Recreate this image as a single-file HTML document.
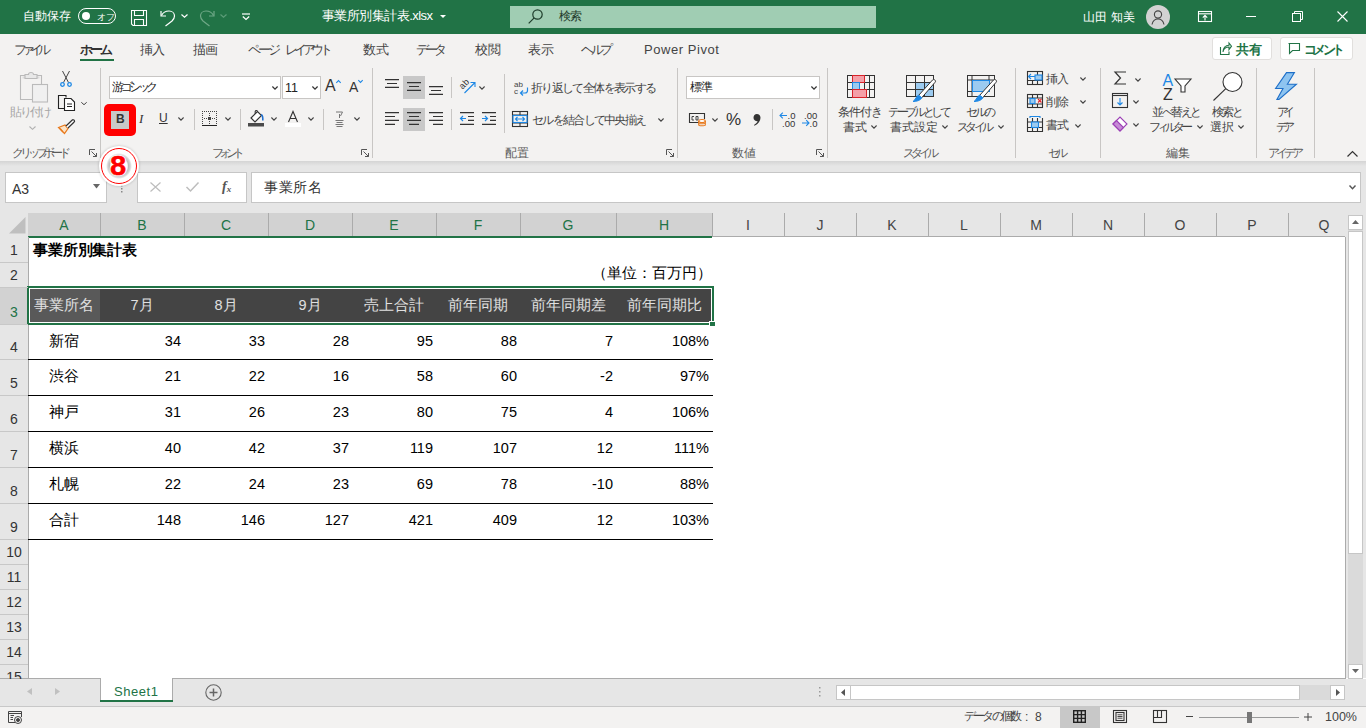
<!DOCTYPE html>
<html><head><meta charset="utf-8">
<style>
*{margin:0;padding:0;box-sizing:border-box}
html,body{width:1366px;height:728px;overflow:hidden;background:#fff;font-family:"Liberation Sans",sans-serif;position:relative}
.a{position:absolute}
.t{position:absolute;white-space:nowrap;line-height:1}
svg{position:absolute;overflow:visible}
#title{left:0;top:0;width:1366px;height:34px;background:#217346}
#tabs{left:0;top:34px;width:1366px;height:27px;background:#f3f2f1}
#ribbon{left:0;top:61px;width:1366px;height:100px;background:#f3f2f1}
#fbar{left:0;top:161px;width:1366px;height:52px;background:#e6e6e6}
.wt{color:#fff;font-size:12px}
.tab{font-size:13px;color:#444;top:43px}
.lbl{font-size:12px;color:#444}
.gl{font-size:12px;color:#5a5a5a;top:147px}
.sep{position:absolute;width:1px;background:#c8c6c4}
.chev{position:absolute}
</style></head><body>
<!-- TITLE BAR -->
<div id="title" class="a"></div>
<span class="t wt fit" style="left:23px;top:10px;width:48px;letter-spacing:0.0px">自動保存</span>
<div class="a" style="left:78px;top:8px;width:38px;height:16px;border:1px solid #fff;border-radius:8px"></div>
<div class="a" style="left:82px;top:12px;width:8px;height:8px;background:#fff;border-radius:50%"></div>
<span class="t" style="left:97px;top:13px;font-size:8.5px;color:#fff">オフ</span>
<svg style="left:131px;top:10px" width="16" height="16" viewBox="0 0 16 16" fill="none" stroke="#fff" stroke-width="1.1"><path d="M0.5 0.5H15.5V15.5H2L0.5 14Z"/><path d="M3.5 0.5V5.5H12.5V0.5"/><path d="M3.5 15.5V9.5H12.5V15.5"/></svg>
<svg style="left:160px;top:10px" width="16" height="16" viewBox="0 0 16 16" fill="none" stroke="#fff" stroke-width="1.2"><path d="M1 1V6H6"/><path d="M1.5 5.5C3 2.5 6 1 9 1C12.5 1 14.5 3.5 14.5 6C14.5 8 13.5 9.5 12 11L5.5 16"/></svg>
<svg style="left:181px;top:14px" width="7" height="4" viewBox="0 0 7 4" fill="none" stroke="#fff" stroke-width="1.2"><path d="M0.5 0.5L3.5 3.3L6.5 0.5"/></svg>
<svg style="left:199px;top:10px" width="16" height="16" viewBox="0 0 16 16" fill="none" stroke="#6fa887" stroke-width="1.2"><path d="M15 1V6H10"/><path d="M14.5 5.5C13 2.5 10 1 7 1C3.5 1 1.5 3.5 1.5 6C1.5 8 2.5 9.5 4 11L10.5 16"/></svg>
<svg style="left:220px;top:14px" width="7" height="4" viewBox="0 0 7 4" fill="none" stroke="#5c9c78" stroke-width="1.2"><path d="M0.5 0.5L3.5 3.3L6.5 0.5"/></svg>
<svg style="left:242px;top:13px" width="8" height="8" viewBox="0 0 8 8" fill="none" stroke="#fff" stroke-width="1.2"><path d="M0 1H8"/><path d="M0.8 3.5L4 6.5L7.2 3.5"/></svg>
<span class="t wt fit" style="left:322px;top:9px;width:111px;font-size:13px;letter-spacing:-0.55px">事業所別集計表.xlsx</span>
<svg style="left:440px;top:15px" width="6" height="3" viewBox="0 0 6 3"><path d="M0 0H6L3 3Z" fill="#fff"/></svg>
<div class="a" style="left:510px;top:6px;width:366px;height:22px;background:#a0cdb3"></div>
<svg style="left:528px;top:9px" width="15" height="15" viewBox="0 0 15 15" fill="none" stroke="#1e3d2b" stroke-width="1.2"><circle cx="9.5" cy="5.5" r="4.7"/><path d="M6.2 8.8L0.7 14.3"/></svg>
<span class="t fit" style="left:559px;top:10px;width:23px;font-size:12px;color:#1f3a2a;letter-spacing:-1.0px">検索</span>
<span class="t wt fit" style="left:1083px;top:11px;width:52px;font-size:12px;letter-spacing:0.16px">山田 知美</span>
<div class="a" style="left:1146px;top:5px;width:24px;height:24px;background:#d2d2d2;border-radius:50%"></div>
<svg style="left:1146px;top:5px" width="24" height="24" viewBox="0 0 24 24" fill="none" stroke="#444" stroke-width="1.1"><circle cx="12" cy="9.5" r="3.6"/><path d="M6 19.5C6.8 16 9 14 12 14C15 14 17.2 16 18 19.5"/></svg>
<svg style="left:1198px;top:11px" width="14" height="11" viewBox="0 0 14 11" fill="none" stroke="#fff" stroke-width="1.1"><rect x="0.5" y="0.5" width="13" height="10"/><path d="M0.5 2.8H13.5"/><path d="M7 9.5V4.5M4.8 6.6L7 4.4L9.2 6.6"/></svg>
<svg style="left:1246px;top:16px" width="10" height="1" viewBox="0 0 10 1"><path d="M0 0.5H10" stroke="#fff" stroke-width="1"/></svg>
<svg style="left:1292px;top:11px" width="11" height="11" viewBox="0 0 11 11" fill="none" stroke="#fff" stroke-width="1"><rect x="0.5" y="2.5" width="8" height="8"/><path d="M2.5 2.5V0.5H10.5V8.5H8.5"/></svg>
<svg style="left:1337px;top:11px" width="11" height="11" viewBox="0 0 11 11" fill="none" stroke="#fff" stroke-width="1.1"><path d="M0.5 0.5L10.5 10.5M10.5 0.5L0.5 10.5"/></svg>

<!-- TABS -->
<div id="tabs" class="a"></div>
<span class="t tab fit" style="left:14px;width:37px;letter-spacing:-5.0px">ファイル</span>
<span class="t tab fit" style="left:80px;width:33px;font-weight:bold;color:#333;letter-spacing:-3.0px">ホーム</span>
<div class="a" style="left:80px;top:59px;width:34px;height:3px;background:#217346"></div>
<span class="t tab fit" style="left:140px;width:25px;letter-spacing:-1.0px">挿入</span>
<span class="t tab fit" style="left:193px;width:25px;letter-spacing:-1.0px">描画</span>
<span class="t tab fit" style="left:248px;width:33px;letter-spacing:-3.0px">ページ</span><span class="t tab fit" style="left:285px;width:48px;letter-spacing:-4.25px">レイアウト</span>
<span class="t tab fit" style="left:363px;width:26px;letter-spacing:0.0px">数式</span>
<span class="t tab fit" style="left:416px;width:31px;letter-spacing:-4.0px">データ</span>
<span class="t tab fit" style="left:475px;width:26px;letter-spacing:0.0px">校閲</span>
<span class="t tab fit" style="left:528px;width:26px;letter-spacing:0.0px">表示</span>
<span class="t tab fit" style="left:581px;width:32px;letter-spacing:-3.5px">ヘルプ</span>
<span class="t tab fit" style="left:644px;width:75px;letter-spacing:0.56px">Power Pivot</span>
<div class="a" style="left:1212px;top:37px;width:60px;height:23px;background:#fff;border:1px solid #e1dfdd;border-radius:3px"></div>
<svg style="left:1220px;top:43px" width="12" height="12" viewBox="0 0 12 12" fill="none" stroke="#217346" stroke-width="1.1"><path d="M0.5 4V11.5H9V8.5"/><path d="M3 9C3.5 5.5 6 4 9 4V6.5L11.5 3.2L9 0V2.3C5.5 2.3 3 5 3 9Z"/></svg>
<span class="t fit" style="left:1236px;top:43px;width:26px;font-size:13px;font-weight:bold;color:#217346;letter-spacing:0.0px">共有</span>
<div class="a" style="left:1280px;top:37px;width:73px;height:23px;background:#fff;border:1px solid #e1dfdd;border-radius:3px"></div>
<svg style="left:1288px;top:43px" width="12" height="12" viewBox="0 0 12 12" fill="none" stroke="#217346" stroke-width="1.1"><path d="M0.5 0.5H11.5V7.5H4.5L1.5 10.5V0.5Z"/></svg>
<span class="t fit" style="left:1304px;top:43px;width:41px;font-size:13px;font-weight:bold;color:#217346;letter-spacing:-3.67px">コメント</span>
<!-- RIBBON -->
<div id="ribbon" class="a"></div>
<!-- separators -->
<div class="sep" style="left:100px;top:68px;height:90px"></div>
<div class="sep" style="left:372px;top:68px;height:90px"></div>
<div class="sep" style="left:677px;top:68px;height:90px"></div>
<div class="sep" style="left:827px;top:68px;height:90px"></div>
<div class="sep" style="left:1015px;top:68px;height:90px"></div>
<div class="sep" style="left:1100px;top:68px;height:90px"></div>
<div class="sep" style="left:1256px;top:68px;height:90px"></div>
<div class="sep" style="left:1314px;top:68px;height:90px"></div>
<!-- Clipboard -->
<svg style="left:19px;top:72px" width="30" height="31" viewBox="0 0 30 31" fill="none" stroke="#bababa" stroke-width="1.1"><path d="M13 27.5H1.5V3.5H22.5V12"/><path d="M3.5 5.5H20.5" stroke="#dcdcdc" stroke-width="2"/><path d="M6 2.5H9.5C9.5 1.2 10.5 0.5 12 0.5C13.5 0.5 14.5 1.2 14.5 2.5H18V6.5H6Z" fill="#e8e8e8"/><rect x="13.5" y="12.5" width="15" height="17.5" fill="#f0f0f0"/></svg>
<span class="t fit" style="left:10px;top:106px;width:42px;font-size:12px;color:#a6a6a6;letter-spacing:-2.0px">貼り付け</span>
<svg style="left:29px;top:126px" width="7" height="4" viewBox="0 0 7 4" fill="none" stroke="#b0b0b0" stroke-width="1.1"><path d="M0.5 0.5L3.5 3.3L6.5 0.5"/></svg>
<svg style="left:60px;top:71px" width="12" height="16" viewBox="0 0 12 16" fill="none" stroke="#444" stroke-width="1"><path d="M2.5 0L8.5 11.5M9.5 0L3.5 11.5"/><circle cx="2.5" cy="13.5" r="1.8" stroke="#1e88e5" stroke-width="1.3"/><circle cx="9.5" cy="13.5" r="1.8" stroke="#1e88e5" stroke-width="1.3"/></svg>
<svg style="left:58px;top:95px" width="17" height="16" viewBox="0 0 17 16" fill="none" stroke="#222" stroke-width="1.1"><path d="M8 2.5V0.5H0.5V13.5H6"/><path d="M6.5 3.5H13L16.5 7V15.5H6.5Z" fill="#fff"/><path d="M9 9H14M9 11.5H14"/></svg>
<svg style="left:81px;top:102px" width="6" height="3" viewBox="0 0 6 3" fill="none" stroke="#444" stroke-width="1"><path d="M0.3 0.3L3 2.7L5.7 0.3"/></svg>
<svg style="left:58px;top:119px" width="17" height="15" viewBox="0 0 17 15" fill="none" stroke-width="1.2"><path d="M0.5 8.5L7 6L10 9.5L6.5 14.5Z" fill="#fbe3c6" stroke="#e8791c"/><path d="M2 9.5L5 13" stroke="#e8791c"/><path d="M8 7L14 1.2C14.7 0.5 15.8 0.6 16.3 1.3C16.8 2 16.5 2.8 15.9 3.3L10 9" stroke="#333" fill="#fff"/></svg>
<span class="t gl fit" style="left:12px;width:59px;letter-spacing:-4.17px">クリップボード</span>
<svg style="left:89px;top:149px" width="8" height="8" viewBox="0 0 8 8" fill="none" stroke="#555" stroke-width="1"><path d="M0.5 6V0.5H6"/><path d="M2.5 2.5L7.5 7.5M7.5 4V7.5H4"/></svg>
<!-- Font -->
<div class="a" style="left:109px;top:76px;width:172px;height:23px;background:#fff;border:1px solid #c8c6c4"></div>
<span class="t fit" style="left:112px;top:81px;width:46px;font-size:12px;color:#222;letter-spacing:-3.5px">游ゴシック</span>
<svg style="left:272px;top:86px" width="6" height="4" viewBox="0 0 6 4" fill="none" stroke="#333" stroke-width="1.2"><path d="M0.4 0.5L3 3.2L5.6 0.5"/></svg>
<div class="a" style="left:282px;top:76px;width:39px;height:23px;background:#fff;border:1px solid #c8c6c4"></div>
<span class="t" style="left:285px;top:82px;font-size:12.5px;color:#222">11</span>
<svg style="left:312px;top:86px" width="6" height="4" viewBox="0 0 6 4" fill="none" stroke="#333" stroke-width="1.2"><path d="M0.4 0.5L3 3.2L5.6 0.5"/></svg>
<span class="t" style="left:325px;top:78px;font-size:16px;color:#333">A</span>
<svg style="left:336px;top:80px" width="5" height="3" viewBox="0 0 5 3" fill="none" stroke="#1e88e5" stroke-width="1.1"><path d="M0.3 2.8L2.5 0.5L4.7 2.8"/></svg>
<span class="t" style="left:349px;top:80px;font-size:14px;color:#333">A</span>
<svg style="left:358px;top:80px" width="5" height="3" viewBox="0 0 5 3" fill="none" stroke="#1e88e5" stroke-width="1.1"><path d="M0.3 0.2L2.5 2.5L4.7 0.2"/></svg>
<div class="a" style="left:104px;top:104px;width:32px;height:32px;background:#ff0000;border-radius:5px"></div>
<div class="a" style="left:111px;top:111px;width:18px;height:18px;background:#c8c8c8"></div>
<span class="t" style="left:116px;top:113px;font-size:12px;font-weight:bold;color:#333">B</span>
<span class="t" style="left:139px;top:112px;font-size:13px;font-style:italic;color:#333;font-family:'Liberation Serif',serif">I</span>
<span class="t" style="left:159px;top:112px;font-size:12px;color:#333;text-decoration:underline">U</span>
<svg style="left:178px;top:117px" width="6" height="4" viewBox="0 0 6 4" fill="none" stroke="#444" stroke-width="1.1"><path d="M0.4 0.5L3 3.2L5.6 0.5"/></svg>
<div class="sep" style="left:194px;top:109px;height:21px"></div>
<svg style="left:202px;top:111px" width="15" height="15" viewBox="0 0 15 15" shape-rendering="crispEdges"><g fill="#444"><path d="M0 0h1v1h-1zM2 0h1v1h-1zM4 0h1v1h-1zM6 0h1v1h-1zM8 0h1v1h-1zM10 0h1v1h-1zM12 0h1v1h-1zM14 0h1v1h-1z"/><path d="M0 2h1v1h-1zM0 4h1v1h-1zM0 6h1v1h-1zM0 8h1v1h-1zM0 10h1v1h-1zM0 12h1v1h-1z"/><path d="M14 2h1v1h-1zM14 4h1v1h-1zM14 6h1v1h-1zM14 8h1v1h-1zM14 10h1v1h-1zM14 12h1v1h-1z"/><path d="M7 2h1v1h-1zM7 4h1v1h-1zM7 8h1v1h-1zM7 10h1v1h-1zM7 12h1v1h-1z"/><path d="M2 7h1v1h-1zM4 7h1v1h-1zM10 7h1v1h-1zM12 7h1v1h-1zM6 6h3v3h-3z"/></g><rect x="0" y="13.5" width="15" height="1.5" fill="#222"/></svg>
<svg style="left:225px;top:117px" width="6" height="4" viewBox="0 0 6 4" fill="none" stroke="#444" stroke-width="1.1"><path d="M0.4 0.5L3 3.2L5.6 0.5"/></svg>
<div class="sep" style="left:240px;top:109px;height:21px"></div>
<svg style="left:248px;top:110px" width="17" height="17" viewBox="0 0 17 17" fill="none" stroke="#333" stroke-width="1.1"><path d="M3 8L9.5 1.5L13.5 5.5L7 12Z" fill="#fff"/><path d="M9.5 1.5C9 0.2 7.5 0.3 7.2 1.5V4" /><path d="M13.2 4.5C14.5 5.2 15 6.5 14.8 10.5" stroke="#1e6fd0" stroke-width="1.6"/><rect x="0" y="13" width="16" height="3.5" fill="#4a4a4a" stroke="none"/></svg>
<svg style="left:271px;top:117px" width="6" height="4" viewBox="0 0 6 4" fill="none" stroke="#444" stroke-width="1.1"><path d="M0.4 0.5L3 3.2L5.6 0.5"/></svg>
<svg style="left:288px;top:111px" width="10" height="11" viewBox="0 0 10 11" fill="none" stroke="#333" stroke-width="1.1"><path d="M0.5 11L5 0.5L9.5 11M2 7.5H8"/></svg>
<div class="a" style="left:285px;top:123px;width:16px;height:4px;background:#fff"></div>
<svg style="left:308px;top:117px" width="6" height="4" viewBox="0 0 6 4" fill="none" stroke="#444" stroke-width="1.1"><path d="M0.4 0.5L3 3.2L5.6 0.5"/></svg>
<div class="sep" style="left:323px;top:109px;height:21px"></div>
<svg style="left:335px;top:111px" width="9" height="16" viewBox="0 0 9 16" fill="none" stroke="#777" stroke-width="1"><path d="M1 1H7.5L5.5 5M4.5 3V7"/><path d="M0.5 9.5H8.5M1.5 11.5H7.5M0.5 13.5H8.5M1.5 15.5H7.5"/></svg>
<svg style="left:354px;top:117px" width="6" height="4" viewBox="0 0 6 4" fill="none" stroke="#444" stroke-width="1.1"><path d="M0.4 0.5L3 3.2L5.6 0.5"/></svg>
<span class="t gl fit" style="left:212px;width:33px;letter-spacing:-5.0px">フォント</span>
<svg style="left:361px;top:149px" width="8" height="8" viewBox="0 0 8 8" fill="none" stroke="#555" stroke-width="1"><path d="M0.5 6V0.5H6"/><path d="M2.5 2.5L7.5 7.5M7.5 4V7.5H4"/></svg>
<!-- Alignment -->
<svg style="left:385px;top:79px" width="15" height="9" viewBox="0 0 15 9" stroke="#333" stroke-width="1.2"><path d="M0 0.6H14M2 4.5H12M0 8.4H14"/></svg>
<div class="a" style="left:403px;top:76px;width:22px;height:23px;background:#c8c8c8"></div>
<svg style="left:407px;top:82px" width="14" height="9" viewBox="0 0 14 9" stroke="#333" stroke-width="1.2"><path d="M0 0.6H14M2 4.5H12M0 8.4H14"/></svg>
<svg style="left:429px;top:86px" width="14" height="9" viewBox="0 0 14 9" stroke="#333" stroke-width="1.2"><path d="M0 0.6H14M2 4.5H12M0 8.4H14"/></svg>
<div class="sep" style="left:451px;top:77px;height:21px"></div>
<svg style="left:459px;top:78px" width="17" height="16" viewBox="0 0 17 16" fill="none" stroke-width="1.1"><text x="0" y="9" font-size="9" fill="#333" stroke="none" transform="rotate(-45 5 6)" font-family="Liberation Sans">ab</text><path d="M5.5 15L16 4.5M11.5 4.5H16V9" stroke="#1e88e5"/></svg>
<svg style="left:479px;top:86px" width="6" height="4" viewBox="0 0 6 4" fill="none" stroke="#444" stroke-width="1.1"><path d="M0.4 0.5L3 3.2L5.6 0.5"/></svg>
<svg style="left:385px;top:112px" width="15" height="13" viewBox="0 0 15 13" stroke="#333" stroke-width="1.2"><path d="M0 0.6H14M0 4.5H10M0 8.4H14M0 12.3H10"/></svg>
<div class="a" style="left:403px;top:108px;width:22px;height:23px;background:#c8c8c8"></div>
<svg style="left:407px;top:112px" width="14" height="13" viewBox="0 0 14 13" stroke="#333" stroke-width="1.2"><path d="M0 0.6H14M2 4.5H12M0 8.4H14M2 12.3H12"/></svg>
<svg style="left:429px;top:112px" width="14" height="13" viewBox="0 0 14 13" stroke="#333" stroke-width="1.2"><path d="M0 0.6H14M4 4.5H14M0 8.4H14M4 12.3H14"/></svg>
<div class="sep" style="left:451px;top:109px;height:21px"></div>
<svg style="left:460px;top:112px" width="15" height="13" viewBox="0 0 15 13" fill="none" stroke="#333" stroke-width="1.2"><path d="M0 0.6H14M8 4.5H14M8 8.4H14M0 12.3H14"/><path d="M0.5 6.5H6M3 4L0.5 6.5L3 9" stroke="#1e88e5"/></svg>
<svg style="left:482px;top:112px" width="15" height="13" viewBox="0 0 15 13" fill="none" stroke="#333" stroke-width="1.2"><path d="M0 0.6H14M8 4.5H14M8 8.4H14M0 12.3H14"/><path d="M0 6.5H5.5M3 4L5.5 6.5L3 9" stroke="#1e88e5"/></svg>
<div class="sep" style="left:504px;top:74px;height:59px"></div>
<svg style="left:514px;top:80px" width="15" height="16" viewBox="0 0 15 16" fill="none"><text x="0" y="7" font-size="8" fill="#444" font-family="Liberation Sans">ab</text><text x="0" y="14" font-size="8" fill="#444" font-family="Liberation Sans">c</text><path d="M13.5 7.5V10.5C13.5 12 12.5 13 11 13H6.5M9 10.5L6.5 13L9 15.5" stroke="#1e88e5" stroke-width="1.2"/></svg>
<span class="t lbl fit" style="left:531px;top:82px;width:126px;letter-spacing:-1.64px">折り返して全体を表示する</span>
<svg style="left:512px;top:111px" width="16" height="16" viewBox="0 0 16 16" fill="none" stroke="#333" stroke-width="1.1"><rect x="0.5" y="0.5" width="15" height="15"/><path d="M0.5 4H15.5M0.5 12H15.5M8 0.5V4M8 12V15.5"/><rect x="1" y="4.5" width="14" height="7" stroke="#1e88e5"/><path d="M3.5 8H12.5M5.5 6L3.5 8L5.5 10M10.5 6L12.5 8L10.5 10" stroke="#1e88e5"/></svg>
<span class="t lbl fit" style="left:532px;top:114px;width:115px;letter-spacing:-1.7px">セルを結合して中央揃え</span>
<svg style="left:658px;top:118px" width="6" height="4" viewBox="0 0 6 4" fill="none" stroke="#444" stroke-width="1.1"><path d="M0.4 0.5L3 3.2L5.6 0.5"/></svg>
<span class="t gl fit" style="left:505px;width:24px;letter-spacing:0.0px">配置</span>
<svg style="left:666px;top:149px" width="8" height="8" viewBox="0 0 8 8" fill="none" stroke="#555" stroke-width="1"><path d="M0.5 6V0.5H6"/><path d="M2.5 2.5L7.5 7.5M7.5 4V7.5H4"/></svg>
<!-- Number -->
<div class="a" style="left:686px;top:76px;width:134px;height:23px;background:#fff;border:1px solid #c8c6c4"></div>
<span class="t fit" style="left:690px;top:81px;width:23px;font-size:12px;color:#222;letter-spacing:-1.0px">標準</span>
<svg style="left:811px;top:86px" width="6" height="4" viewBox="0 0 6 4" fill="none" stroke="#333" stroke-width="1.2"><path d="M0.4 0.5L3 3.2L5.6 0.5"/></svg>
<svg style="left:689px;top:113px" width="17" height="14" viewBox="0 0 17 14" fill="none" stroke="#333" stroke-width="1.1"><path d="M10 9.5H0.5V0.5H15.5V6"/><path d="M3 3.5H5M3 3.5V7H5M7 3.5H9V7H7Z" stroke-width="0.9"/><ellipse cx="13" cy="8" rx="3.3" ry="1.5" stroke="#e8791c" fill="#fff"/><path d="M9.7 8V12C9.7 13 16.3 13 16.3 12V8M9.7 10C9.7 11 16.3 11 16.3 10" stroke="#e8791c"/></svg>
<svg style="left:712px;top:118px" width="6" height="4" viewBox="0 0 6 4" fill="none" stroke="#444" stroke-width="1.1"><path d="M0.4 0.5L3 3.2L5.6 0.5"/></svg>
<span class="t" style="left:726px;top:111px;font-size:17px;color:#333">%</span>
<svg style="left:753px;top:114px" width="8" height="12" viewBox="0 0 8 12"><path d="M3.8 0C6 0 7.5 1.6 7.5 3.8C7.5 7 5.3 10 1.5 11.8L1 11C3 9.8 4.3 8.3 4.6 7.2C2.5 7.3 0.5 6 0.5 3.7C0.5 1.5 2 0 3.8 0Z" fill="#333"/></svg>
<div class="sep" style="left:772px;top:109px;height:21px"></div>
<svg style="left:779px;top:111px" width="16" height="16" viewBox="0 0 16 16" fill="none"><text x="8.5" y="7.5" font-size="9.5" fill="#333" font-family="Liberation Sans">.0</text><text x="3" y="15.5" font-size="9.5" fill="#333" font-family="Liberation Sans">.00</text><path d="M8 4.5H1M3.8 1.7L1 4.5L3.8 7.3" stroke="#1e88e5" stroke-width="1.1"/></svg>
<svg style="left:801px;top:111px" width="16" height="16" viewBox="0 0 16 16" fill="none"><text x="3" y="7.5" font-size="9.5" fill="#333" font-family="Liberation Sans">.00</text><text x="8.5" y="15.5" font-size="9.5" fill="#333" font-family="Liberation Sans">.0</text><path d="M1 12H8M5.2 9.2L8 12L5.2 14.8" stroke="#1e88e5" stroke-width="1.1"/></svg>
<span class="t gl fit" style="left:732px;width:24px;letter-spacing:0.0px">数値</span>
<svg style="left:816px;top:149px" width="8" height="8" viewBox="0 0 8 8" fill="none" stroke="#555" stroke-width="1"><path d="M0.5 6V0.5H6"/><path d="M2.5 2.5L7.5 7.5M7.5 4V7.5H4"/></svg>
<!-- Styles -->
<svg style="left:847px;top:75px" width="28" height="23" viewBox="0 0 28 23" fill="none" stroke="#333" stroke-width="1"><rect x="0.5" y="0.5" width="27" height="22"/><path d="M0.5 7.5H27.5M0.5 14.5H27.5M5.5 0.5V22.5M17.5 0.5V22.5M22.5 0.5V22.5"/><rect x="5.5" y="0.5" width="12" height="7" fill="#f4a0a8" stroke="#d8232a"/><rect x="5.5" y="7.5" width="7" height="7" fill="#9ccbf0" stroke="#1e88e5"/><rect x="5.5" y="14.5" width="14" height="8" fill="#f4a0a8" stroke="#d8232a"/></svg>
<span class="t lbl fit" style="left:838px;top:106px;width:45px;letter-spacing:-1.0px">条件付き</span>
<span class="t lbl fit" style="left:843px;top:121px;width:24px;letter-spacing:0.0px">書式</span>
<svg style="left:871px;top:125px" width="6" height="4" viewBox="0 0 6 4" fill="none" stroke="#444" stroke-width="1.1"><path d="M0.4 0.5L3 3.2L5.6 0.5"/></svg>
<svg style="left:906px;top:75px" width="31" height="27" viewBox="0 0 31 27" fill="none" stroke="#333" stroke-width="1"><rect x="9.5" y="7.5" width="18" height="14" fill="#9ccbf0" stroke="#1e88e5"/><rect x="0.5" y="0.5" width="27" height="21"/><path d="M0.5 7.5H27.5M0.5 14.5H27.5M9.5 0.5V21.5M18.5 0.5V21.5"/><path d="M12.5 20.5L26.5 5C27.5 4 29.5 4.8 29.5 6.2C29.5 6.8 29.2 7.2 28.8 7.6L15.5 23" fill="#fff"/><path d="M7 26.5C10.5 26.5 14.5 25.5 15.8 22.8L12.8 20.2C10 21 10 24.5 7 26.5Z" fill="#1e88e5" stroke="#1e88e5" stroke-linejoin="round"/></svg>
<span class="t lbl fit" style="left:888px;top:106px;width:64px;letter-spacing:-3.33px">テーブルとして</span>
<span class="t lbl fit" style="left:890px;top:121px;width:48px;letter-spacing:0.0px">書式設定</span>
<svg style="left:942px;top:125px" width="6" height="4" viewBox="0 0 6 4" fill="none" stroke="#444" stroke-width="1.1"><path d="M0.4 0.5L3 3.2L5.6 0.5"/></svg>
<svg style="left:967px;top:75px" width="31" height="27" viewBox="0 0 31 27" fill="none" stroke="#333" stroke-width="1"><rect x="0.5" y="0.5" width="27" height="21"/><path d="M0.5 5H27.5M0.5 16.5H5M5 0.5V21.5M22 0.5V5"/><rect x="5.5" y="5.5" width="17" height="11" fill="#9ccbf0" stroke="#1e88e5"/><path d="M12.5 20.5L26.5 5C27.5 4 29.5 4.8 29.5 6.2C29.5 6.8 29.2 7.2 28.8 7.6L15.5 23" fill="#fff"/><path d="M7 26.5C10.5 26.5 14.5 25.5 15.8 22.8L12.8 20.2C10 21 10 24.5 7 26.5Z" fill="#1e88e5" stroke="#1e88e5" stroke-linejoin="round"/></svg>
<span class="t lbl fit" style="left:966px;top:106px;width:30px;letter-spacing:-3.0px">セルの</span>
<span class="t lbl fit" style="left:957px;top:121px;width:37px;letter-spacing:-3.67px">スタイル</span>
<svg style="left:998px;top:125px" width="6" height="4" viewBox="0 0 6 4" fill="none" stroke="#444" stroke-width="1.1"><path d="M0.4 0.5L3 3.2L5.6 0.5"/></svg>
<span class="t gl fit" style="left:903px;width:36px;letter-spacing:-4.0px">スタイル</span>
<!-- Cells -->
<svg style="left:1027px;top:71px" width="16" height="14" viewBox="0 0 16 14" fill="none" stroke="#333" stroke-width="1.1"><rect x="0.5" y="0.5" width="15" height="13"/><path d="M0.5 9.5H15.5M5.5 9.5V13.5M10.5 0.5V13.5"/><rect x="8" y="4" width="7" height="5" fill="#9ccbf0" stroke="#1e88e5"/><path d="M1.5 5.5H8M4 3L1.5 5.5L4 8" stroke="#1e88e5"/></svg>
<span class="t lbl fit" style="left:1046px;top:73px;width:23px;letter-spacing:-1.0px">挿入</span>
<svg style="left:1080px;top:77px" width="6" height="4" viewBox="0 0 6 4" fill="none" stroke="#444" stroke-width="1.1"><path d="M0.4 0.5L3 3.2L5.6 0.5"/></svg>
<svg style="left:1027px;top:94px" width="16" height="14" viewBox="0 0 16 14" fill="none" stroke="#333" stroke-width="1.1"><rect x="0.5" y="0.5" width="15" height="13"/><path d="M0.5 4H15.5M0.5 10H15.5M5.5 0.5V4M5.5 10V13.5M10.5 0.5V4M10.5 10V13.5"/><rect x="3" y="4.5" width="5" height="5" fill="#9ccbf0" stroke="#1e88e5"/><path d="M11 5L14.5 8.5M14.5 5L11 8.5" stroke="#e8232a"/></svg>
<span class="t lbl fit" style="left:1046px;top:96px;width:23px;letter-spacing:-1.0px">削除</span>
<svg style="left:1080px;top:100px" width="6" height="4" viewBox="0 0 6 4" fill="none" stroke="#444" stroke-width="1.1"><path d="M0.4 0.5L3 3.2L5.6 0.5"/></svg>
<svg style="left:1027px;top:116px" width="16" height="16" viewBox="0 0 16 16" fill="none" stroke="#333" stroke-width="1.1"><path d="M0.5 2V15.5H15.5V2"/><path d="M0.5 6H15.5M0.5 11.5H15.5M5.5 2V15.5M10.5 2V15.5"/><rect x="4.5" y="6" width="7" height="5.5" fill="#9ccbf0" stroke="#1e88e5"/><path d="M3 0.5H13M3 0V2M13 0V2" stroke="#1e88e5"/></svg>
<span class="t lbl fit" style="left:1046px;top:119px;width:23px;letter-spacing:-1.0px">書式</span>
<svg style="left:1075px;top:124px" width="6" height="4" viewBox="0 0 6 4" fill="none" stroke="#444" stroke-width="1.1"><path d="M0.4 0.5L3 3.2L5.6 0.5"/></svg>
<span class="t gl fit" style="left:1048px;width:20px;letter-spacing:-4.0px">セル</span>
<!-- Editing -->
<svg style="left:1114px;top:71px" width="12" height="14" viewBox="0 0 12 14" fill="none" stroke="#333" stroke-width="1.2"><path d="M12 1H1L6.5 7L1 13H12"/></svg>
<svg style="left:1135px;top:78px" width="6" height="4" viewBox="0 0 6 4" fill="none" stroke="#444" stroke-width="1.1"><path d="M0.4 0.5L3 3.2L5.6 0.5"/></svg>
<svg style="left:1112px;top:93px" width="16" height="15" viewBox="0 0 16 15" fill="none" stroke="#333" stroke-width="1.1"><rect x="0.5" y="0.5" width="15" height="14"/><path d="M0.5 2.5H15.5"/><path d="M8 5V12M5.5 9.5L8 12L10.5 9.5" stroke="#1e88e5"/></svg>
<svg style="left:1133px;top:100px" width="6" height="4" viewBox="0 0 6 4" fill="none" stroke="#444" stroke-width="1.1"><path d="M0.4 0.5L3 3.2L5.6 0.5"/></svg>
<svg style="left:1112px;top:116px" width="16" height="16" viewBox="0 0 16 16" fill="none" stroke="#9b3fb5" stroke-width="1.1"><path d="M1 8L8 1L15 8L8 15Z" fill="#fff"/><path d="M1 8L4.5 4.5L11.5 11.5L8 15Z" fill="#c68bd6"/></svg>
<svg style="left:1133px;top:123px" width="6" height="4" viewBox="0 0 6 4" fill="none" stroke="#444" stroke-width="1.1"><path d="M0.4 0.5L3 3.2L5.6 0.5"/></svg>
<svg style="left:1163px;top:73px" width="29" height="27" viewBox="0 0 29 27" fill="none"><text x="-0.5" y="13" font-size="16" fill="#1e88e5" font-family="Liberation Sans">A</text><text x="0" y="26.5" font-size="16" fill="#333" font-family="Liberation Sans">Z</text><path d="M12 6H28L22 13V19H18V13Z" stroke="#333" stroke-width="1.1" fill="#fff"/></svg>
<span class="t lbl fit" style="left:1152px;top:106px;width:50px;letter-spacing:-2.5px">並べ替えと</span>
<span class="t lbl fit" style="left:1149px;top:121px;width:44px;letter-spacing:-4.0px">フィルター</span>
<svg style="left:1197px;top:125px" width="6" height="4" viewBox="0 0 6 4" fill="none" stroke="#444" stroke-width="1.1"><path d="M0.4 0.5L3 3.2L5.6 0.5"/></svg>
<svg style="left:1213px;top:72px" width="30" height="29" viewBox="0 0 30 29" fill="none" stroke="#333" stroke-width="1.1"><circle cx="19.5" cy="10" r="9.5" fill="#fff"/><path d="M12.8 16.7L0.5 28.5"/></svg>
<span class="t lbl fit" style="left:1212px;top:106px;width:32px;letter-spacing:-2.0px">検索と</span>
<span class="t lbl fit" style="left:1210px;top:121px;width:24px;letter-spacing:0.0px">選択</span>
<svg style="left:1238px;top:125px" width="6" height="4" viewBox="0 0 6 4" fill="none" stroke="#444" stroke-width="1.1"><path d="M0.4 0.5L3 3.2L5.6 0.5"/></svg>
<span class="t gl fit" style="left:1166px;width:24px;letter-spacing:0.0px">編集</span>
<!-- Ideas -->
<svg style="left:1275px;top:72px" width="22" height="28" viewBox="0 0 22 28" fill="none"><path d="M11.5 0.6H19.4L12.4 12.2H21.4L4 27.4H1.9L8 16.5H0.6Z" fill="#8ec4f0" stroke="#1e6fc8" stroke-width="1.1" stroke-linejoin="miter"/></svg>
<span class="t lbl fit" style="left:1277px;top:106px;width:18px;letter-spacing:-6.0px">アイ</span>
<span class="t lbl fit" style="left:1276px;top:121px;width:19px;letter-spacing:-5.0px">デア</span>
<span class="t gl fit" style="left:1268px;width:36px;letter-spacing:-4.0px">アイデア</span>
<svg style="left:1347px;top:151px" width="11" height="6" viewBox="0 0 11 6" fill="none" stroke="#333" stroke-width="1.2"><path d="M0.5 5.5L5.5 0.5L10.5 5.5"/></svg>
<!-- ribbon shadow -->
<div class="a" style="left:0;top:161px;width:1366px;height:5px;background:linear-gradient(#d2d2d2,#e6e6e6)"></div>
<!-- FORMULA BAR -->
<div id="fbar" class="a"></div>
<div class="a" style="left:0;top:161px;width:1366px;height:5px;background:linear-gradient(#d4d4d4,#e6e6e6)"></div>
<div class="a" style="left:5px;top:172px;width:102px;height:31px;background:#fff;border:1px solid #c6c6c6"></div>
<span class="t" style="left:12px;top:182px;font-size:14px;color:#333">A3</span>
<svg style="left:93px;top:184px" width="7" height="5" viewBox="0 0 7 5"><path d="M0 0H7L3.5 4.5Z" fill="#666"/></svg>
<svg style="left:121px;top:185px" width="2" height="8" viewBox="0 0 2 8" fill="#888"><rect x="0" y="0" width="1.5" height="1.5"/><rect x="0" y="3" width="1.5" height="1.5"/><rect x="0" y="6" width="1.5" height="1.5"/></svg>
<div class="a" style="left:137px;top:172px;width:110px;height:31px;background:#fff;border:1px solid #c6c6c6"></div>
<svg style="left:150px;top:182px" width="11" height="10" viewBox="0 0 11 10" fill="none" stroke="#bdbdbd" stroke-width="1.2"><path d="M0.5 0.5L10.5 9.5M10.5 0.5L0.5 9.5"/></svg>
<svg style="left:186px;top:182px" width="13" height="10" viewBox="0 0 13 10" fill="none" stroke="#bdbdbd" stroke-width="1.5"><path d="M0.5 5L4.5 9L12.5 0.5"/></svg>
<span class="t" style="left:222px;top:180px;font-size:14px;color:#555;font-style:italic;font-weight:bold;font-family:'Liberation Serif',serif">f<span style="font-size:9px;position:relative;top:1px">x</span></span>
<div class="a" style="left:251px;top:172px;width:1110px;height:31px;background:#fff;border:1px solid #c6c6c6"></div>
<span class="t fit" style="left:264px;top:180px;width:58px;font-size:14px;color:#333;letter-spacing:0.67px">事業所名</span>
<svg style="left:1349px;top:185px" width="7" height="5" viewBox="0 0 7 5" fill="none" stroke="#555" stroke-width="1.4"><path d="M0.5 0.5L3.5 3.8L6.5 0.5"/></svg>

<!-- COLUMN HEADERS -->
<div class="a" style="left:0;top:213px;width:1346px;height:24px;background:#e6e6e6"></div>
<div class="a" style="left:28px;top:213px;width:684px;height:24px;background:#d2d2d2"></div>
<svg style="left:9px;top:217px" width="17" height="17" viewBox="0 0 17 17"><path d="M16.5 0V16.5H0Z" fill="#bfbfbf"/></svg>
<div id="cols"></div>
<div class="a" style="left:28px;top:236px;width:684px;height:2px;background:#217346"></div>
<div class="a" style="left:712px;top:236px;width:633px;height:1px;background:#ababab"></div>

<!-- ROW HEADERS -->
<div class="a" style="left:0;top:237px;width:28px;height:441px;background:#e6e6e6"></div>
<div class="a" style="left:0;top:287px;width:28px;height:37px;background:#d2d2d2"></div>
<div class="a" style="left:28px;top:237px;width:1px;height:441px;background:#ababab"></div>
<div id="rows"></div>

<!-- SHEET -->
<div class="a" style="left:29px;top:238px;width:1316px;height:440px;background:#fff"></div>
<div class="a" style="left:1345px;top:237px;width:1px;height:442px;background:#ababab"></div>
<div class="a" style="left:0;top:678px;width:1346px;height:1px;background:#ababab"></div>
<span class="t fit" style="left:33px;top:243px;width:104px;font-size:14.5px;font-weight:bold;color:#000;letter-spacing:-0.17px">事業所別集計表</span>
<span class="t" style="left:592px;top:266px;font-size:14.67px;color:#000">（単位：百万円）</span>
<!-- header row -->
<div class="a" style="left:27px;top:286px;width:687px;height:39px;border:2px solid #217346"></div>
<div class="a" style="left:29px;top:288px;width:683px;height:35px;border:1px solid #fff"></div>
<div class="a" style="left:30px;top:289px;width:681px;height:33px;background:#444444"></div>
<div class="a" style="left:30px;top:289px;width:70px;height:33px;background:#595959"></div>
<div class="a" style="left:709px;top:321px;width:6px;height:5px;background:#217346;border:1px solid #fff;border-right:none;border-bottom:none"></div>
<!-- COL LABELS -->
<div class="t" style="left:28px;top:218px;width:72px;text-align:center;font-size:14px;color:#217346">A</div>
<div class="t" style="left:100px;top:218px;width:84px;text-align:center;font-size:14px;color:#217346">B</div>
<div class="a" style="left:100px;top:213px;width:1px;height:23px;background:#ababab"></div>
<div class="t" style="left:184px;top:218px;width:84px;text-align:center;font-size:14px;color:#217346">C</div>
<div class="a" style="left:184px;top:213px;width:1px;height:23px;background:#ababab"></div>
<div class="t" style="left:268px;top:218px;width:84px;text-align:center;font-size:14px;color:#217346">D</div>
<div class="a" style="left:268px;top:213px;width:1px;height:23px;background:#ababab"></div>
<div class="t" style="left:352px;top:218px;width:84px;text-align:center;font-size:14px;color:#217346">E</div>
<div class="a" style="left:352px;top:213px;width:1px;height:23px;background:#ababab"></div>
<div class="t" style="left:436px;top:218px;width:84px;text-align:center;font-size:14px;color:#217346">F</div>
<div class="a" style="left:436px;top:213px;width:1px;height:23px;background:#ababab"></div>
<div class="t" style="left:520px;top:218px;width:96px;text-align:center;font-size:14px;color:#217346">G</div>
<div class="a" style="left:520px;top:213px;width:1px;height:23px;background:#ababab"></div>
<div class="t" style="left:616px;top:218px;width:96px;text-align:center;font-size:14px;color:#217346">H</div>
<div class="a" style="left:616px;top:213px;width:1px;height:23px;background:#ababab"></div>
<div class="t" style="left:712px;top:218px;width:72px;text-align:center;font-size:14px;color:#444">I</div>
<div class="a" style="left:712px;top:213px;width:1px;height:23px;background:#ababab"></div>
<div class="t" style="left:784px;top:218px;width:72px;text-align:center;font-size:14px;color:#444">J</div>
<div class="a" style="left:784px;top:213px;width:1px;height:23px;background:#ababab"></div>
<div class="t" style="left:856px;top:218px;width:72px;text-align:center;font-size:14px;color:#444">K</div>
<div class="a" style="left:856px;top:213px;width:1px;height:23px;background:#ababab"></div>
<div class="t" style="left:928px;top:218px;width:72px;text-align:center;font-size:14px;color:#444">L</div>
<div class="a" style="left:928px;top:213px;width:1px;height:23px;background:#ababab"></div>
<div class="t" style="left:1000px;top:218px;width:72px;text-align:center;font-size:14px;color:#444">M</div>
<div class="a" style="left:1000px;top:213px;width:1px;height:23px;background:#ababab"></div>
<div class="t" style="left:1072px;top:218px;width:72px;text-align:center;font-size:14px;color:#444">N</div>
<div class="a" style="left:1072px;top:213px;width:1px;height:23px;background:#ababab"></div>
<div class="t" style="left:1144px;top:218px;width:72px;text-align:center;font-size:14px;color:#444">O</div>
<div class="a" style="left:1144px;top:213px;width:1px;height:23px;background:#ababab"></div>
<div class="t" style="left:1216px;top:218px;width:72px;text-align:center;font-size:14px;color:#444">P</div>
<div class="a" style="left:1216px;top:213px;width:1px;height:23px;background:#ababab"></div>
<div class="t" style="left:1288px;top:218px;width:72px;text-align:center;font-size:14px;color:#444">Q</div>
<div class="a" style="left:1288px;top:213px;width:1px;height:23px;background:#ababab"></div>
<div class="a" style="left:1288px;top:213px;width:1px;height:23px;background:#ababab"></div>
<!-- ROW LABELS -->
<div class="t" style="left:0;top:243px;width:28px;text-align:center;font-size:14px;color:#333">1</div>
<div class="a" style="left:0;top:262px;width:28px;height:1px;background:#c8c8c8"></div>
<div class="t" style="left:0;top:268px;width:28px;text-align:center;font-size:14px;color:#333">2</div>
<div class="a" style="left:0;top:287px;width:28px;height:1px;background:#c8c8c8"></div>
<div class="t" style="left:0;top:305px;width:28px;text-align:center;font-size:14px;color:#217346">3</div>
<div class="a" style="left:0;top:324px;width:28px;height:1px;background:#c8c8c8"></div>
<div class="t" style="left:0;top:340px;width:28px;text-align:center;font-size:14px;color:#333">4</div>
<div class="a" style="left:0;top:359px;width:28px;height:1px;background:#c8c8c8"></div>
<div class="t" style="left:0;top:376px;width:28px;text-align:center;font-size:14px;color:#333">5</div>
<div class="a" style="left:0;top:395px;width:28px;height:1px;background:#c8c8c8"></div>
<div class="t" style="left:0;top:412px;width:28px;text-align:center;font-size:14px;color:#333">6</div>
<div class="a" style="left:0;top:431px;width:28px;height:1px;background:#c8c8c8"></div>
<div class="t" style="left:0;top:448px;width:28px;text-align:center;font-size:14px;color:#333">7</div>
<div class="a" style="left:0;top:467px;width:28px;height:1px;background:#c8c8c8"></div>
<div class="t" style="left:0;top:484px;width:28px;text-align:center;font-size:14px;color:#333">8</div>
<div class="a" style="left:0;top:503px;width:28px;height:1px;background:#c8c8c8"></div>
<div class="t" style="left:0;top:520px;width:28px;text-align:center;font-size:14px;color:#333">9</div>
<div class="a" style="left:0;top:539px;width:28px;height:1px;background:#c8c8c8"></div>
<div class="t" style="left:0;top:545px;width:28px;text-align:center;font-size:14px;color:#333">10</div>
<div class="a" style="left:0;top:564px;width:28px;height:1px;background:#c8c8c8"></div>
<div class="t" style="left:0;top:570px;width:28px;text-align:center;font-size:14px;color:#333">11</div>
<div class="a" style="left:0;top:589px;width:28px;height:1px;background:#c8c8c8"></div>
<div class="t" style="left:0;top:595px;width:28px;text-align:center;font-size:14px;color:#333">12</div>
<div class="a" style="left:0;top:614px;width:28px;height:1px;background:#c8c8c8"></div>
<div class="t" style="left:0;top:620px;width:28px;text-align:center;font-size:14px;color:#333">13</div>
<div class="a" style="left:0;top:639px;width:28px;height:1px;background:#c8c8c8"></div>
<div class="t" style="left:0;top:645px;width:28px;text-align:center;font-size:14px;color:#333">14</div>
<div class="a" style="left:0;top:664px;width:28px;height:1px;background:#c8c8c8"></div>
<div class="t" style="left:0;top:670px;width:28px;text-align:center;font-size:14px;color:#333">15</div>
<!-- CELLS -->
<div class="t" style="left:28px;top:298px;width:72px;text-align:center;font-size:14.5px;color:#e0e0e0">事業所名</div>
<div class="t" style="left:100px;top:298px;width:84px;text-align:center;font-size:14.5px;color:#e0e0e0">7月</div>
<div class="t" style="left:184px;top:298px;width:84px;text-align:center;font-size:14.5px;color:#e0e0e0">8月</div>
<div class="t" style="left:268px;top:298px;width:84px;text-align:center;font-size:14.5px;color:#e0e0e0">9月</div>
<div class="t" style="left:352px;top:298px;width:84px;text-align:center;font-size:14.5px;color:#e0e0e0">売上合計</div>
<div class="t" style="left:436px;top:298px;width:84px;text-align:center;font-size:14.5px;color:#e0e0e0">前年同期</div>
<div class="t" style="left:520px;top:298px;width:96px;text-align:center;font-size:14.5px;color:#e0e0e0">前年同期差</div>
<div class="t" style="left:616px;top:298px;width:96px;text-align:center;font-size:14.5px;color:#e0e0e0">前年同期比</div>
<div class="t" style="left:28px;top:334px;width:72px;text-align:center;font-size:14.5px;color:#000">新宿</div>
<div class="t" style="left:100px;top:334px;width:81px;text-align:right;font-size:14.5px;color:#000">34</div>
<div class="t" style="left:184px;top:334px;width:81px;text-align:right;font-size:14.5px;color:#000">33</div>
<div class="t" style="left:268px;top:334px;width:81px;text-align:right;font-size:14.5px;color:#000">28</div>
<div class="t" style="left:352px;top:334px;width:81px;text-align:right;font-size:14.5px;color:#000">95</div>
<div class="t" style="left:436px;top:334px;width:81px;text-align:right;font-size:14.5px;color:#000">88</div>
<div class="t" style="left:520px;top:334px;width:93px;text-align:right;font-size:14.5px;color:#000">7</div>
<div class="t" style="left:616px;top:334px;width:93px;text-align:right;font-size:14.5px;color:#000">108%</div>
<div class="a" style="left:28px;top:359px;width:685px;height:1px;background:#000"></div>
<div class="t" style="left:28px;top:369px;width:72px;text-align:center;font-size:14.5px;color:#000">渋谷</div>
<div class="t" style="left:100px;top:369px;width:81px;text-align:right;font-size:14.5px;color:#000">21</div>
<div class="t" style="left:184px;top:369px;width:81px;text-align:right;font-size:14.5px;color:#000">22</div>
<div class="t" style="left:268px;top:369px;width:81px;text-align:right;font-size:14.5px;color:#000">16</div>
<div class="t" style="left:352px;top:369px;width:81px;text-align:right;font-size:14.5px;color:#000">58</div>
<div class="t" style="left:436px;top:369px;width:81px;text-align:right;font-size:14.5px;color:#000">60</div>
<div class="t" style="left:520px;top:369px;width:93px;text-align:right;font-size:14.5px;color:#000">-2</div>
<div class="t" style="left:616px;top:369px;width:93px;text-align:right;font-size:14.5px;color:#000">97%</div>
<div class="a" style="left:28px;top:395px;width:685px;height:1px;background:#000"></div>
<div class="t" style="left:28px;top:405px;width:72px;text-align:center;font-size:14.5px;color:#000">神戸</div>
<div class="t" style="left:100px;top:405px;width:81px;text-align:right;font-size:14.5px;color:#000">31</div>
<div class="t" style="left:184px;top:405px;width:81px;text-align:right;font-size:14.5px;color:#000">26</div>
<div class="t" style="left:268px;top:405px;width:81px;text-align:right;font-size:14.5px;color:#000">23</div>
<div class="t" style="left:352px;top:405px;width:81px;text-align:right;font-size:14.5px;color:#000">80</div>
<div class="t" style="left:436px;top:405px;width:81px;text-align:right;font-size:14.5px;color:#000">75</div>
<div class="t" style="left:520px;top:405px;width:93px;text-align:right;font-size:14.5px;color:#000">4</div>
<div class="t" style="left:616px;top:405px;width:93px;text-align:right;font-size:14.5px;color:#000">106%</div>
<div class="a" style="left:28px;top:431px;width:685px;height:1px;background:#000"></div>
<div class="t" style="left:28px;top:441px;width:72px;text-align:center;font-size:14.5px;color:#000">横浜</div>
<div class="t" style="left:100px;top:441px;width:81px;text-align:right;font-size:14.5px;color:#000">40</div>
<div class="t" style="left:184px;top:441px;width:81px;text-align:right;font-size:14.5px;color:#000">42</div>
<div class="t" style="left:268px;top:441px;width:81px;text-align:right;font-size:14.5px;color:#000">37</div>
<div class="t" style="left:352px;top:441px;width:81px;text-align:right;font-size:14.5px;color:#000">119</div>
<div class="t" style="left:436px;top:441px;width:81px;text-align:right;font-size:14.5px;color:#000">107</div>
<div class="t" style="left:520px;top:441px;width:93px;text-align:right;font-size:14.5px;color:#000">12</div>
<div class="t" style="left:616px;top:441px;width:93px;text-align:right;font-size:14.5px;color:#000">111%</div>
<div class="a" style="left:28px;top:467px;width:685px;height:1px;background:#000"></div>
<div class="t" style="left:28px;top:477px;width:72px;text-align:center;font-size:14.5px;color:#000">札幌</div>
<div class="t" style="left:100px;top:477px;width:81px;text-align:right;font-size:14.5px;color:#000">22</div>
<div class="t" style="left:184px;top:477px;width:81px;text-align:right;font-size:14.5px;color:#000">24</div>
<div class="t" style="left:268px;top:477px;width:81px;text-align:right;font-size:14.5px;color:#000">23</div>
<div class="t" style="left:352px;top:477px;width:81px;text-align:right;font-size:14.5px;color:#000">69</div>
<div class="t" style="left:436px;top:477px;width:81px;text-align:right;font-size:14.5px;color:#000">78</div>
<div class="t" style="left:520px;top:477px;width:93px;text-align:right;font-size:14.5px;color:#000">-10</div>
<div class="t" style="left:616px;top:477px;width:93px;text-align:right;font-size:14.5px;color:#000">88%</div>
<div class="a" style="left:28px;top:503px;width:685px;height:1px;background:#000"></div>
<div class="t" style="left:28px;top:513px;width:72px;text-align:center;font-size:14.5px;color:#000">合計</div>
<div class="t" style="left:100px;top:513px;width:81px;text-align:right;font-size:14.5px;color:#000">148</div>
<div class="t" style="left:184px;top:513px;width:81px;text-align:right;font-size:14.5px;color:#000">146</div>
<div class="t" style="left:268px;top:513px;width:81px;text-align:right;font-size:14.5px;color:#000">127</div>
<div class="t" style="left:352px;top:513px;width:81px;text-align:right;font-size:14.5px;color:#000">421</div>
<div class="t" style="left:436px;top:513px;width:81px;text-align:right;font-size:14.5px;color:#000">409</div>
<div class="t" style="left:520px;top:513px;width:93px;text-align:right;font-size:14.5px;color:#000">12</div>
<div class="t" style="left:616px;top:513px;width:93px;text-align:right;font-size:14.5px;color:#000">103%</div>
<div class="a" style="left:28px;top:539px;width:685px;height:1px;background:#000"></div>


<!-- SCROLLBAR V -->
<div class="a" style="left:1346px;top:213px;width:20px;height:465px;background:#e6e6e6"></div>
<div class="a" style="left:1348px;top:230px;width:15px;height:434px;background:#dadada"></div>
<div class="a" style="left:1348px;top:215px;width:15px;height:15px;background:#fff;border:1px solid #c6c6c6"></div>
<svg style="left:1352px;top:220px" width="7" height="4" viewBox="0 0 7 4"><path d="M0 4H7L3.5 0Z" fill="#666"/></svg>
<div class="a" style="left:1348px;top:231px;width:15px;height:323px;background:#fff;border:1px solid #c6c6c6"></div>
<div class="a" style="left:1348px;top:664px;width:15px;height:15px;background:#fff;border:1px solid #c6c6c6"></div>
<svg style="left:1352px;top:669px" width="7" height="4" viewBox="0 0 7 4"><path d="M0 0H7L3.5 4Z" fill="#666"/></svg>

<!-- TAB BAR -->
<div class="a" style="left:0;top:679px;width:1366px;height:27px;background:#e6e6e6"></div>
<svg style="left:27px;top:688px" width="5" height="7" viewBox="0 0 5 7"><path d="M5 0V7L0 3.5Z" fill="#c0c0c0"/></svg>
<svg style="left:55px;top:688px" width="5" height="7" viewBox="0 0 5 7"><path d="M0 0V7L5 3.5Z" fill="#c0c0c0"/></svg>
<div class="a" style="left:100px;top:678px;width:73px;height:24px;background:#fff;border-left:1px solid #ababab;border-right:1px solid #ababab"></div>
<div class="a" style="left:100px;top:700px;width:73px;height:2px;background:#217346"></div>
<span class="t fit" style="left:114px;top:685px;width:44px;font-size:13px;color:#217346;letter-spacing:0.56px">Sheet1</span>
<svg style="left:205px;top:684px" width="17" height="17" viewBox="0 0 17 17" fill="none" stroke="#666" stroke-width="1.1"><circle cx="8.5" cy="8.5" r="7.7"/><path d="M8.5 4.5V12.5M4.5 8.5H12.5" stroke-width="1.5"/></svg>
<svg style="left:819px;top:687px" width="2" height="10" viewBox="0 0 2 10" fill="#999"><rect x="0" y="0" width="1.5" height="1.5"/><rect x="0" y="4" width="1.5" height="1.5"/><rect x="0" y="8" width="1.5" height="1.5"/></svg>
<div class="a" style="left:836px;top:685px;width:509px;height:15px;background:#dadada"></div>
<div class="a" style="left:836px;top:685px;width:15px;height:15px;background:#fff;border:1px solid #c6c6c6"></div>
<svg style="left:841px;top:689px" width="4" height="7" viewBox="0 0 4 7"><path d="M4 0V7L0 3.5Z" fill="#555"/></svg>
<div class="a" style="left:850px;top:685px;width:450px;height:15px;background:#fff;border:1px solid #c6c6c6"></div>
<div class="a" style="left:1330px;top:685px;width:15px;height:15px;background:#fff;border:1px solid #c6c6c6"></div>
<svg style="left:1336px;top:689px" width="4" height="7" viewBox="0 0 4 7"><path d="M0 0V7L4 3.5Z" fill="#555"/></svg>

<!-- STATUS BAR -->
<div class="a" style="left:0;top:706px;width:1366px;height:22px;background:#f3f2f1"></div>
<div class="a" style="left:0;top:706px;width:1366px;height:1px;background:#c8c8c8"></div>
<svg style="left:8px;top:711px" width="14" height="13" viewBox="0 0 14 13" fill="none" stroke="#444" stroke-width="1"><path d="M7 11.5H0.5V0.5H13.5V6"/><path d="M0.5 2.5H13.5M2.5 4.5H6M2.5 6.5H5M2.5 8.5H5"/><circle cx="10" cy="9" r="3.5" fill="#f3f2f1"/><circle cx="10" cy="9" r="1.5" fill="#444"/></svg>
<span class="t fit" style="left:964px;top:710px;width:58px;font-size:12px;color:#444;letter-spacing:-2.8px">データの個数</span><span class="t" style="left:1025px;top:711px;font-size:12px;color:#444">:</span><span class="t" style="left:1035px;top:711px;font-size:12px;color:#444">8</span>
<div class="a" style="left:1060px;top:706px;width:40px;height:22px;background:#c8c8c8"></div>
<svg style="left:1073px;top:710px" width="13" height="13" viewBox="0 0 13 13" fill="none" stroke="#222" stroke-width="1.4"><rect x="0.7" y="0.7" width="11.6" height="11.6"/><path d="M0.7 4.6H12.3M0.7 8.4H12.3M4.6 0.7V12.3M8.4 0.7V12.3"/></svg>
<svg style="left:1113px;top:710px" width="14" height="13" viewBox="0 0 14 13" fill="none" stroke="#333" stroke-width="1.1"><rect x="0.5" y="0.5" width="13" height="12"/><rect x="3" y="2.5" width="8" height="8"/><path d="M4.5 4.8H9.5M4.5 6.5H9.5M4.5 8.2H9.5" stroke-width="0.9"/></svg>
<svg style="left:1153px;top:710px" width="14" height="13" viewBox="0 0 14 13" fill="none" stroke="#333" stroke-width="1.1"><rect x="0.5" y="0.5" width="13" height="12"/><path d="M0.5 7.5H8.5V0.5M4.5 0.5V7.5"/></svg>
<div class="a" style="left:1186px;top:716px;width:7px;height:1px;background:#444"></div>
<div class="a" style="left:1199px;top:717px;width:100px;height:1px;background:#9a9a9a"></div>
<div class="a" style="left:1247px;top:712px;width:5px;height:11px;background:#777"></div>
<svg style="left:1304px;top:713px" width="8" height="8" viewBox="0 0 8 8" stroke="#444" stroke-width="1"><path d="M4 0V8M0 4H8"/></svg>
<span class="t" style="left:1325px;top:711px;font-size:12.5px;color:#444">100%</span>

<!-- BADGE -->
<div class="a" style="left:99px;top:146px;width:40px;height:40px;border-radius:50%;background:#fff;box-shadow:0 0 3px rgba(0,0,0,0.22)"></div>
<div class="a" style="left:101px;top:148px;width:36px;height:36px;border-radius:50%;border:1.4px solid #ff0000;background:radial-gradient(circle closest-side,#fff 48%,#bdbdbd 56%,#d4d4d4 66%,#fff 76%)"></div>
<span class="t" id="b8" style="left:110px;top:153px;font-size:27px;font-weight:bold;color:#ff0000;-webkit-text-stroke:0.4px #ff0000;text-shadow:0 0 1px #fff,1px 0 1px #fff,-1px 0 1px #fff,0 1px 1px #fff,0 -1px 1px #fff,0 0 3px #fff;transform:scaleX(1.08);transform-origin:left top">8</span>
<script>
(function(){
  var els=document.querySelectorAll('.fit');
  for(var i=0;i<els.length;i++){
    var e=els[i]; var W=parseFloat(e.style.width); if(!W) continue;
    e.style.letterSpacing='0px';
    e.style.width='auto';
    var nat=e.getBoundingClientRect().width;
    var n=e.textContent.length;
    if(n>1){ e.style.letterSpacing=((W-nat)/(n-1))+'px'; }
    e.style.width='';
  }
})();
</script>
</body></html>
